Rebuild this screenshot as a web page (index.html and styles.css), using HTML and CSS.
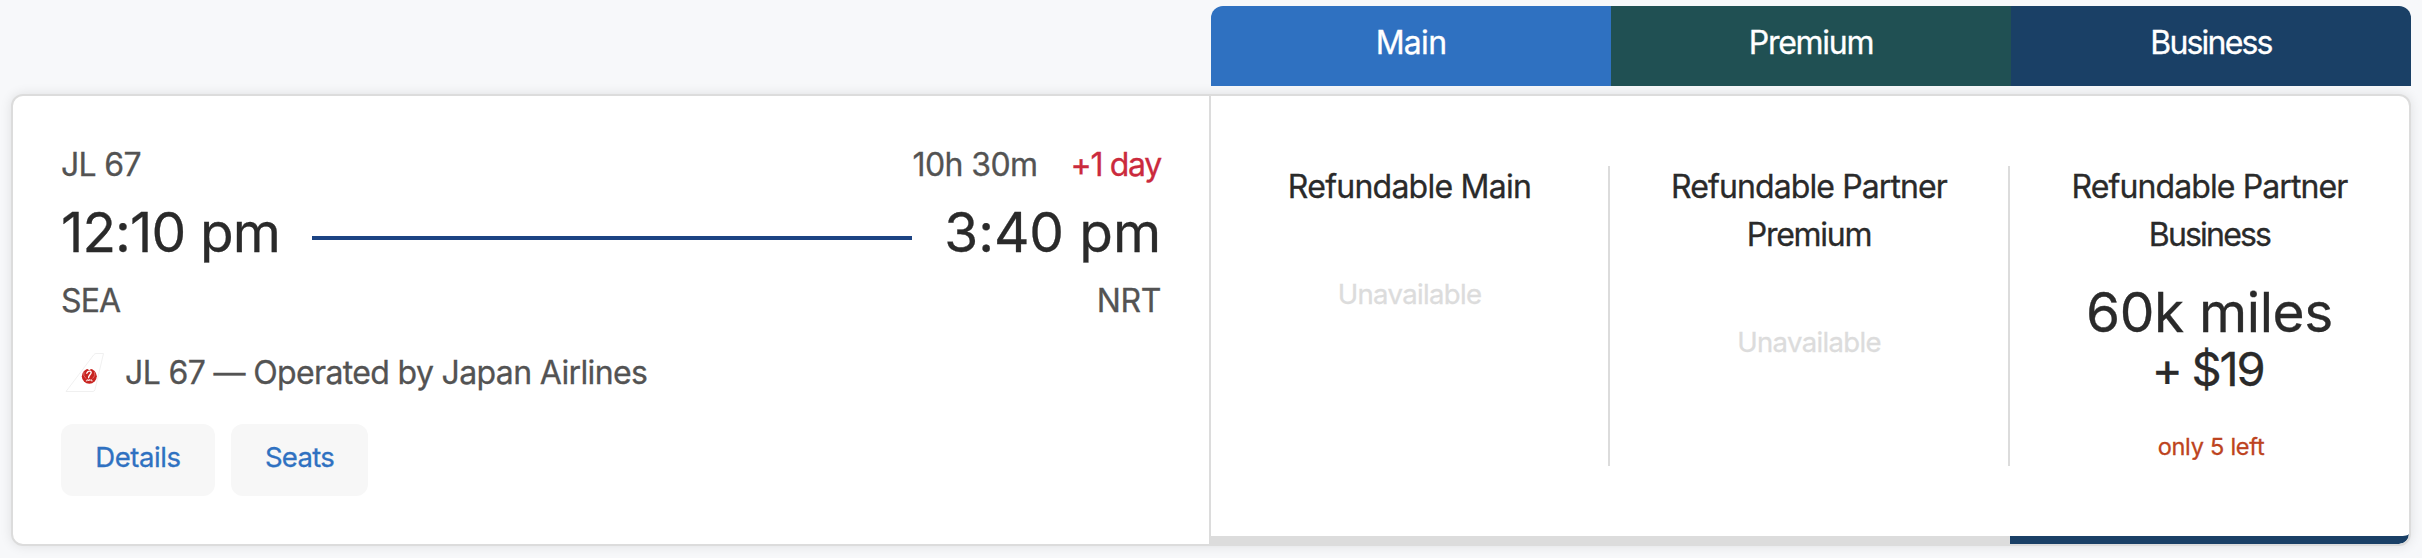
FILE: index.html
```html
<!DOCTYPE html>
<html lang="en">
<head>
<meta charset="utf-8">
<title>Flight</title>
<link rel="stylesheet" href="styles.css">
</head>
<body>
<main class="page">
  <div class="tabs">
    <div class="tab tab-main"><span class="t-main">Main</span></div>
    <div class="tab tab-premium"><span class="t-premium">Premium</span></div>
    <div class="tab tab-business"><span class="t-business">Business</span></div>
  </div>
  <article class="card">
    <section class="trip">
      <div class="row row-top">
        <span class="t-flight">JL 67</span>
        <span class="meta"><span class="t-duration">10h 30m</span><span class="plus-day">+1 day</span></span>
      </div>
      <div class="row row-times">
        <span class="t-depart">12:10 pm</span>
        <span class="path-line"></span>
        <span class="t-arrive">3:40 pm</span>
      </div>
      <div class="row row-airports"><span class="t-sea">SEA</span><span class="t-nrt">NRT</span></div>
      <div class="operator">
        <svg class="tail" viewBox="0 0 40 40" width="40" height="40">
          <path d="M1 38.5 29 1.5 Q30 .5 31 .5H38.5L30 36.5Q29.5 38.5 28 38.5Z" fill="#fff" stroke="#ececec" stroke-width=".8"/>
          <circle cx="24.3" cy="23.3" r="7.5" fill="#c8231f"/>
          <path d="M21.6 15.3 24.3 17.2 27 15.3 26 14.6H22.6Z" fill="#fff"/>
          <path d="M21.4 20.6 23 18.5Q25.6 17.4 26.2 19.2Q26.3 20.4 24.8 22Q23.2 23.8 23.6 25.2" fill="none" stroke="#fff" stroke-width="1.3"/>
          <path d="M18.9 18.8Q17.8 23 21 25.6M29.7 18.8Q30.8 23 27.6 25.6" fill="none" stroke="#e58a87" stroke-width=".7"/>
          <path d="M20.9 27.8H22.3V26.2M23.3 28 24.2 26.3 25.1 28M26.1 26.1V27.8H27.6" fill="none" stroke="#fff" stroke-width=".9"/>
        </svg>
        <span class="t-operated">JL 67 — Operated by Japan Airlines</span>
      </div>
      <div class="actions">
        <button class="btn btn-details"><span class="t-details">Details</span></button>
        <button class="btn btn-seats"><span class="t-seats">Seats</span></button>
      </div>
    </section>
    <section class="fares">
      <div class="fare">
        <h3 class="fare-title"><span class="t-refmain">Refundable Main</span></h3>
        <p class="unavailable">Unavailable</p>
      </div>
      <div class="fare">
        <h3 class="fare-title"><span class="t-partner">Refundable Partner</span><span class="t-premium">Premium</span></h3>
        <p class="unavailable">Unavailable</p>
      </div>
      <div class="fare fare-open">
        <h3 class="fare-title"><span class="t-partner">Refundable Partner</span><span class="t-business">Business</span></h3>
        <p class="miles">60k miles</p>
        <p class="cash">+ $19</p>
        <p class="left">only 5 left</p>
      </div>
    </section>
  </article>
</main>
</body>
</html>
```
FILE: styles.css
```css
* { box-sizing: border-box; }
html { overflow: hidden; }
body {
  margin: 0;
  background: #f7f8fa;
  font-family: Inter, "Liberation Sans", sans-serif;
  font-size: 32px;
  color: #2a2a2a;
  -webkit-text-stroke: .3px currentColor;
}
.page { height: 558px; padding: 6px 11px 12px; overflow: hidden; }
span, p { white-space: nowrap; }
h3, p { margin: 0; font-weight: 400; }

/* Tracking per label */
.t-main { letter-spacing: -.7px; }
.t-premium { letter-spacing: -1.25px; }
.t-business { letter-spacing: -1.8px; }
.t-flight { letter-spacing: -.7px; }
.t-duration { letter-spacing: -.6px; }
.plus-day { letter-spacing: -1.3px; }
.t-depart { letter-spacing: -.9px; }
.t-arrive { letter-spacing: -.1px; }
.t-sea { letter-spacing: -.9px; }
.t-nrt { letter-spacing: -.4px; }
.t-operated { letter-spacing: -.64px; }
.t-details { letter-spacing: -.4px; }
.t-seats { letter-spacing: -.7px; }
.t-refmain { letter-spacing: -.75px; }
.t-partner { letter-spacing: -.9px; }

.tabs {
  display: grid;
  grid-template-columns: repeat(3, 400px);
  justify-content: end;
  height: 80px;
  margin-bottom: 8px;
  position: relative;
  z-index: 1;
}
.tab { line-height: 74px; text-align: center; color: #fff; }
.tab-main { background: #2f71c1; border-top-left-radius: 12px; }
.tab-premium { background: #205053; }
.tab-business { background: #1a4066; border-top-right-radius: 12px; }

.card {
  display: grid;
  grid-template-columns: 1198px 1fr;
  height: 452px;
  border: 2px solid #dcdcdc;
  border-radius: 12px;
  background: #fff;
  box-shadow: 0 0 12px rgba(0, 0, 0, .1);
  overflow: hidden;
}
.trip { padding: 44px 48px 0 48px; border-right: 2px solid #dcdcdc; }
.row { display: flex; align-items: center; justify-content: space-between; color: #535353; }
.row-top { height: 49px; }
.row-times { height: 86px; font-size: 55px; color: #2a2a2a; }
.row-airports { height: 51px; }
.meta { display: flex; gap: 33px; }
.plus-day { color: #cb2a3d; }
.path-line { width: 600px; height: 4px; margin-top: 12px; background: #1c4383; }
.operator { display: flex; align-items: center; height: 92px; color: #535353; }
.tail { margin: 1px 20px 0 4px; }
.actions { display: flex; gap: 16px; margin-top: 6px; }
.btn {
  height: 72px;
  padding: 0 0 6px;
  border: 0;
  border-radius: 12px;
  background: #f7f7f7;
  color: #2f71c1;
  font: 27.5px Inter, "Liberation Sans", sans-serif;
}
.btn-details { width: 154px; }
.btn-seats { width: 137px; }

.fares { display: grid; grid-template-columns: 399px 400px 1fr; }
.fare {
  padding-top: 66.5px;
  padding-right: 2px;
  text-align: center;
  border-bottom: 8px solid #dcdcdc;
  background: linear-gradient(#dcdcdc, #dcdcdc) right 70px / 2px 300px no-repeat;
}
.fare-open { border-bottom-color: #1a4066; border-bottom-right-radius: 10px; background: none; padding-right: 0; }
.fare-title { display: flex; flex-direction: column; align-items: center; font-size: 32px; line-height: 48px; }
.unavailable { margin-top: 63.5px; font-size: 27.5px; letter-spacing: -.65px; line-height: 40px; color: #dcdcdc; }
.miles { margin-top: 25.5px; font-size: 55px; letter-spacing: -.4px; line-height: 56px; }
.cash { padding-right: 4px; font-size: 47px; letter-spacing: -2.2px; line-height: 57px; }
.left { margin-top: 34.5px; padding-left: 3px; font-size: 23.5px; letter-spacing: -.25px; line-height: 30px; color: #bd4320; }
```
